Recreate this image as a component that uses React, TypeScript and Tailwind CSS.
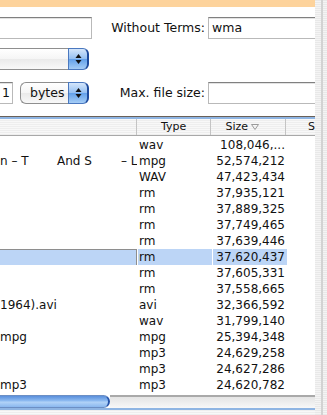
const rows = [
  { name: "", type: "wav", size: "108,046,..." },
  { name: "split", type: "mpg", size: "52,574,212" },
  { name: "", type: "WAV", size: "47,423,434" },
  { name: "", type: "rm", size: "37,935,121" },
  { name: "", type: "rm", size: "37,889,325" },
  { name: "", type: "rm", size: "37,749,465" },
  { name: "", type: "rm", size: "37,639,446" },
  { name: "", type: "rm", size: "37,620,437", selected: true },
  { name: "", type: "rm", size: "37,605,331" },
  { name: "", type: "rm", size: "37,558,665" },
  { name: "1964).avi", type: "avi", size: "32,366,592" },
  { name: "", type: "wav", size: "31,799,140" },
  { name: "mpg", type: "mpg", size: "25,394,348" },
  { name: "", type: "mp3", size: "24,629,258" },
  { name: "", type: "mp3", size: "24,627,286" },
  { name: "mp3", type: "mp3", size: "24,620,782" },
]

function Arrows() {
  return (
    <svg width="7" height="12" viewBox="0 0 7 12">
      <polygon points="3.5,1 6.5,5 0.5,5" fill="#111" />
      <polygon points="0.5,7 6.5,7 3.5,11" fill="#111" />
    </svg>
  )
}

function Popup({ label, className }: { label: string; className: string }) {
  return (
    <div className={`flex h-[22px] ${className}`}>
      <div className="flex-1 flex items-center pl-[9px] border border-r-0 border-[#8f8f8f] rounded-l-[6px] bg-[linear-gradient(#ffffff,#f5f5f5_50%,#eaeaea_51%,#f8f8f8)] text-[12.5px]">
        {label}
      </div>
      <div className="w-[21px] flex items-center justify-center rounded-r-[6px] border border-[#4a78bf] border-r-[#1d4a9c] border-r-2 bg-[linear-gradient(#d4e6fb,#93bff2_50%,#62a0ea_51%,#a5cdf6)]">
        <Arrows />
      </div>
    </div>
  )
}

function Field({ value, className }: { value: string; className: string }) {
  return (
    <div className={`h-[22px] flex items-center bg-white border border-[#b9b9b9] border-t-[#808080] text-[12.5px] shadow-[inset_0_1px_0_#e2e2e2] ${className}`}>
      {value}
    </div>
  )
}

export default function App() {
  return (
    <div className="flex w-[327px] h-[415px] overflow-hidden bg-white text-[#111] font-['DejaVu_Sans',sans-serif]">
      <div className="w-[315px] flex flex-col">
        <div className="h-[7px] bg-[#fdd39c]" />

        {/* search form */}
        <div className="flex flex-col pt-[10px] pb-[12px]">
          <div className="flex items-center">
            <Field value="" className="w-[92px] border-l-0" />
            <div className="w-[113px] text-right text-[12.5px]">Without Terms:</div>
            <Field value="wma" className="flex-1 ml-[3px] pl-[3px] border-r-0" />
          </div>
          <div className="flex items-center mt-[9px]">
            <Popup label="" className="w-[95px] -ml-[6px]" />
          </div>
          <div className="flex items-center mt-[12px]">
            <Field value="1" className="w-[13px] border-l-0 justify-end pr-[2px]" />
            <Popup label="bytes" className="w-[69px] ml-[7px]" />
            <div className="w-[116px] text-right text-[12.5px]">Max. file size:</div>
            <Field value="" className="flex-1 ml-[3px] border-r-0" />
          </div>
        </div>

        {/* results table */}
        <div className="h-[1px] bg-[#6a6158]" />
        <div className="h-[2px] bg-[#8fb5e3]" />
        <div className="h-[17px] flex border-b border-[#a8a8a8] text-[11px] bg-[repeating-linear-gradient(0deg,#eeeeee_0px,#eeeeee_1px,#f8f8f8_1px,#f8f8f8_2px)]">
          <div className="w-[138px] border-r border-[#c4c4c4]" />
          <div className="w-[75px] border-r border-[#c4c4c4] flex items-center justify-center">Type</div>
          <div className="w-[75px] border-r border-[#c4c4c4] flex items-center justify-center pr-[12px] gap-[3px]">
            <span>Size</span>
            <svg width="8" height="6" viewBox="0 0 8 6">
              <polygon points="0.5,0.5 7.5,0.5 4,5.5" fill="none" stroke="#9a9a9a" />
            </svg>
          </div>
          <div className="flex-1 flex items-center pl-[22px]">S</div>
        </div>

        <div className="flex flex-col mt-[1px] text-[12px]">
          {rows.map((r, i) => (
            <div key={i} className="h-[16px] flex items-center whitespace-nowrap">
              <div
                className={`w-[137px] mr-[1px] h-full flex items-center overflow-hidden ${
                  r.selected ? "bg-[#bcd5f6] border-t border-r border-[#8e8e8e]" : ""
                }`}
              >
                {r.name === "split" ? (
                  <>
                    <span className="w-[57px] shrink-0">n – T</span>
                    <span className="w-[64px] shrink-0">And S</span>
                    <span className="shrink-0">– L</span>
                  </>
                ) : (
                  <span className="shrink-0">{r.name}</span>
                )}
              </div>
              <div className={`w-[74px] mr-[1px] h-full flex items-center pl-[1px] ${r.selected ? "bg-[#bcd5f6]" : ""}`}>
                {r.type}
              </div>
              <div className={`w-[74px] mr-[1px] h-full flex items-center justify-end pr-[2px] ${r.selected ? "bg-[#bcd5f6]" : ""}`}>
                {r.size}
              </div>
              <div className="flex-1" />
            </div>
          ))}
        </div>

        <div className="h-[2px]" />
        {/* horizontal scroller */}
        <div className="h-[13px] flex">
          <div className="w-[110px] rounded-r-full border-r-2 border-y border-[#2553a8] border-y-[#6c8fc4] bg-[linear-gradient(#5a8fdc,#8fbcf1_45%,#b2d3f7_55%,#8ab8ef)]" />
          <div className="flex-1 border-t-2 border-[#a9a9a9] bg-[linear-gradient(#e4e4e4,#f8f8f8)]" />
        </div>
        <div className="h-[2px] bg-[#8fb5e3]" />
        <div className="flex-1 bg-[repeating-linear-gradient(0deg,#eeeeee_0px,#eeeeee_1px,#f8f8f8_1px,#f8f8f8_2px)]" />
      </div>

      {/* window edge */}
      <div className="flex-1 flex bg-[repeating-linear-gradient(0deg,#e8e8e8_0px,#e8e8e8_1px,#f4f4f4_1px,#f4f4f4_2px)]">
        <div className="w-[6px]" />
        <div className="w-[2px] bg-[#d2d2d2]" />
      </div>
    </div>
  )
}
